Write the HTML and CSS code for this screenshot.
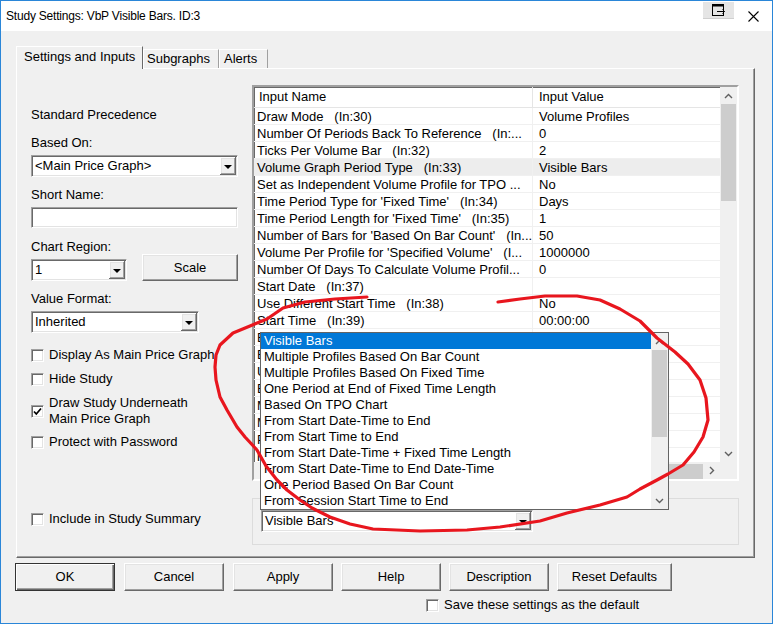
FILE: index.html
```html
<!DOCTYPE html>
<html lang="en">
<head>
	<meta charset="utf-8">
	<title>Study Settings</title>
	<link rel="stylesheet" href="styles.css">
</head>
<body>
<div class="dialog">
	<div class="titlebar">
		<span class="title">Study Settings: VbP Visible Bars. ID:3</span>
		<span class="tb-btn">
			<svg width="14" height="12" viewBox="0 0 14 12"><rect x="0.5" y="0.5" width="11" height="11" fill="none" stroke="#000"/><rect x="0" y="0" width="12" height="2.5" fill="#000"/><path d="M5 7.5H12.5M10.5 5.5L12.5 7.5L10.5 9.5" stroke="#000" fill="none"/></svg>
		</span>
		<span class="tb-close">
			<svg width="11" height="11" viewBox="0 0 11 11"><path d="M0.5 0.5L10.5 10.5M10.5 0.5L0.5 10.5" stroke="#000" stroke-width="1.1"/></svg>
		</span>
	</div>

	<div class="client">
		<div class="tabs">
			<span class="tab active">Settings and Inputs</span>
			<span class="tab tab-sub">Subgraphs</span>
			<span class="tab tab-alerts">Alerts</span>
		</div>

		<div class="panel">
			<div class="left">
				<div class="label first">Standard Precedence</div>
				<div class="label based">Based On:</div>
				<div class="combo combo-full"><span class="combo-text">&lt;Main Price Graph&gt;</span><span class="drop"></span></div>
				<div class="label">Short Name:</div>
				<div class="textbox"></div>
				<div class="label region">Chart Region:</div>
				<div class="region-row">
					<div class="combo combo-small"><span class="combo-text">1</span><span class="drop"></span></div>
					<div class="btn scale">Scale</div>
				</div>
				<div class="label">Value Format:</div>
				<div class="combo combo-format"><span class="combo-text">Inherited</span><span class="drop"></span></div>

				<div class="check c1"><span class="box"></span><span>Display As Main Price Graph</span></div>
				<div class="check c2"><span class="box"></span><span>Hide Study</span></div>
				<div class="check c3"><span class="box"><svg width="9" height="9" viewBox="0 0 9 9"><path d="M1 4.5L3.3 7L8 1.5" stroke="#000" stroke-width="1.7" fill="none"/></svg></span><span>Draw Study Underneath<br>Main Price Graph</span></div>
				<div class="check c4"><span class="box"></span><span>Protect with Password</span></div>
				<div class="check c5"><span class="box"></span><span>Include in Study Summary</span></div>
			</div>

			<div class="right">
				<div class="grid">
					<div class="grid-body">
						<div class="row head"><span class="name">Input Name</span><span class="value">Input Value</span></div>
						<div class="row"><span class="name">Draw Mode   (In:30)</span><span class="value">Volume Profiles</span></div>
						<div class="row"><span class="name">Number Of Periods Back To Reference   (In:...</span><span class="value">0</span></div>
						<div class="row"><span class="name">Ticks Per Volume Bar   (In:32)</span><span class="value">2</span></div>
						<div class="row current"><span class="name">Volume Graph Period Type   (In:33)</span><span class="value">Visible Bars</span></div>
						<div class="row"><span class="name">Set as Independent Volume Profile for TPO ...</span><span class="value">No</span></div>
						<div class="row"><span class="name">Time Period Type for 'Fixed Time'   (In:34)</span><span class="value">Days</span></div>
						<div class="row"><span class="name">Time Period Length for 'Fixed Time'   (In:35)</span><span class="value">1</span></div>
						<div class="row"><span class="name">Number of Bars for 'Based On Bar Count'   (In...</span><span class="value">50</span></div>
						<div class="row"><span class="name">Volume Per Profile for 'Specified Volume'   (I...</span><span class="value">1000000</span></div>
						<div class="row"><span class="name">Number Of Days To Calculate Volume Profil...</span><span class="value">0</span></div>
						<div class="row"><span class="name">Start Date   (In:37)</span><span class="value"></span></div>
						<div class="row"><span class="name">Use Different Start Time   (In:38)</span><span class="value">No</span></div>
						<div class="row"><span class="name">Start Time   (In:39)</span><span class="value">00:00:00</span></div>
						<div class="row"><span class="name">E</span><span class="value"></span></div>
						<div class="row"><span class="name">E</span><span class="value"></span></div>
						<div class="row"><span class="name">U</span><span class="value"></span></div>
						<div class="row"><span class="name">E</span><span class="value"></span></div>
						<div class="row"><span class="name">M</span><span class="value"></span></div>
						<div class="row"><span class="name">M</span><span class="value"></span></div>
						<div class="row"><span class="name">P</span><span class="value"></span></div>
						<div class="row"><span class="name">n</span><span class="value"></span></div>
					</div>
					<div class="vscroll">
						<span class="arrow"><svg width="9" height="6" viewBox="0 0 9 6"><path d="M1 5L4.5 1.5L8 5" stroke="#606060" stroke-width="1.4" fill="none"/></svg></span>
						<span class="thumb v-thumb"></span>
						<span class="track"></span>
						<span class="arrow"><svg width="9" height="6" viewBox="0 0 9 6"><path d="M1 1L4.5 4.5L8 1" stroke="#606060" stroke-width="1.4" fill="none"/></svg></span>
					</div>
					<div class="hscroll">
						<span class="arrow"><svg width="6" height="9" viewBox="0 0 6 9"><path d="M5 1L1.5 4.5L5 8" stroke="#606060" stroke-width="1.4" fill="none"/></svg></span>
						<span class="track"></span>
						<span class="thumb h-thumb"></span>
						<span class="arrow"><svg width="6" height="9" viewBox="0 0 6 9"><path d="M1 1L4.5 4.5L1 8" stroke="#606060" stroke-width="1.4" fill="none"/></svg></span>
					</div>
					<div class="corner"></div>
				</div>

				<div class="group">
					<div class="combo combo-edit"><span class="combo-text">Visible Bars</span><span class="drop"></span></div>
				</div>
			</div>
		</div>

		<div class="buttons">
			<div class="btn default">OK</div>
			<div class="btn">Cancel</div>
			<div class="btn">Apply</div>
			<div class="btn">Help</div>
			<div class="btn">Description</div>
			<div class="btn wide">Reset Defaults</div>
		</div>
		<div class="save-default"><span class="box"></span><span>Save these settings as the default</span></div>
	</div>

	<!-- open list of the combo in the group box -->
	<div class="dropdown">
		<div class="dd-items">
			<div class="dd-item selected">Visible Bars</div>
			<div class="dd-item">Multiple Profiles Based On Bar Count</div>
			<div class="dd-item">Multiple Profiles Based On Fixed Time</div>
			<div class="dd-item">One Period at End of Fixed Time Length</div>
			<div class="dd-item">Based On TPO Chart</div>
			<div class="dd-item">From Start Date-Time to End</div>
			<div class="dd-item">From Start Time to End</div>
			<div class="dd-item">From Start Date-Time + Fixed Time Length</div>
			<div class="dd-item">From Start Date-Time to End Date-Time</div>
			<div class="dd-item">One Period Based On Bar Count</div>
			<div class="dd-item">From Session Start Time to End</div>
		</div>
		<div class="dd-scroll">
			<span class="arrow"><svg width="9" height="6" viewBox="0 0 9 6"><path d="M1 5L4.5 1.5L8 5" stroke="#606060" stroke-width="1.4" fill="none"/></svg></span>
			<span class="thumb dd-thumb"></span>
			<span class="track"></span>
			<span class="arrow"><svg width="9" height="6" viewBox="0 0 9 6"><path d="M1 1L4.5 4.5L8 1" stroke="#606060" stroke-width="1.4" fill="none"/></svg></span>
		</div>
	</div>

	<!-- red pen mark drawn over the screenshot -->
	<svg class="ink" width="773" height="624" viewBox="0 0 773 624">
		<polyline points="498,302 520,299 545,296 577,296 600,300 620,309 640,321 657,338 675,352 688,364 700,380 706,398 708,420 703,437 694,452 683,465 668,474 657,480 640,489 627,497 600,505 567,513 540,521 500,527 467,530 420,531 373,529 350,524 330,517 312,508 300,500 287,490 277,480 266,466 257,450 245,437 237,427 227,410 220,397 216,380 215,367 216,355 220,345 233,333 250,326 267,319 283,308 305,302 335,299 367,297" fill="none" stroke="#e8161e" stroke-width="3.2" stroke-linejoin="round" stroke-linecap="round"/>
	</svg>
</div>
</body>
</html>
```

FILE: styles.css
```css
*	{margin:0;padding:0;box-sizing:border-box;}
body	{font-family:"Liberation Sans", Arial, sans-serif;font-size:13px;line-height:16px;color:#000;background:#fff;}

.dialog	{position:relative;width:773px;height:624px;border:1px solid #2a86d8;background:#f0f0f0;overflow:hidden;}

.titlebar	{display:flex;align-items:center;height:30px;padding-left:5px;background:#fff;}
.titlebar .title	{flex:1;font-size:12px;letter-spacing:-0.2px;}
.titlebar .tb-btn	{align-self:flex-start;display:flex;justify-content:center;align-items:center;width:31px;height:17px;margin-top:1px;background:#e5e5e5;border-bottom:1px solid #cfcfcf;}
.titlebar .tb-close	{display:flex;width:11px;margin:0 13px 0 14px;}

.client	{padding:0 17px 0 15px;}

.tabs	{display:flex;align-items:flex-end;height:22px;margin-top:15px;position:relative;z-index:1;}
.tab	{height:19px;line-height:17px;padding-left:3px;border:1px solid;border-color:#fff #a0a0a0 transparent #fff;border-bottom:0;}
.tab.active	{width:127px;height:23px;margin-bottom:-1px;padding-left:7px;line-height:19px;background:#f0f0f0;border-right-color:#696969;}
.tab.tab-sub	{width:76px;}
.tab.tab-alerts	{width:49px;padding-left:4px;}

.panel	{display:flex;gap:14px;height:490px;padding:16px 15px 0 14px;border:1px solid;border-color:#fff #696969 #696969 #fff;box-shadow:inset -1px -1px #a0a0a0;}

.left	{width:207px;display:flex;flex-direction:column;}
.left .label	{margin-top:9px;height:16px;line-height:17px;}
.left .label.first	{margin-top:21px;}
.left .label.based	{margin-top:12px;}
.left .label.region	{margin-top:10px;}

.combo	{display:flex;align-items:center;height:22px;margin-top:5px;background:#fff;border:1px solid;border-color:#a0a0a0 #fff #fff #a0a0a0;box-shadow:inset 1px 1px #696969, inset -1px -1px #e3e3e3;}
.combo .combo-text	{flex:1;padding-left:3px;white-space:nowrap;overflow:hidden;}
.combo .drop	{position:relative;width:16px;height:18px;margin-right:1px;background:#f0f0f0;box-shadow:inset -1px -1px #696969, inset 1px 1px #fff, inset -2px -2px #a0a0a0, inset 2px 2px #e3e3e3;}
.combo .drop::after	{content:"";position:absolute;left:4px;top:8px;border-style:solid;border-width:4px 4px 0 4px;border-color:#000 transparent transparent transparent;}
.combo-full	{width:207px;}
.combo-small	{width:96px;}
.combo-format	{width:168px;}
.combo-edit	{width:272px;margin-top:0;}

.textbox	{width:207px;height:21px;margin-top:5px;background:#fff;border:1px solid;border-color:#a0a0a0 #fff #fff #a0a0a0;box-shadow:inset 1px 1px #696969, inset -1px -1px #e3e3e3;}

.region-row	{display:flex;align-items:flex-start;gap:15px;}
.region-row .combo	{margin-top:5px;}

.btn	{display:flex;justify-content:center;align-items:center;width:100px;height:28px;background:#f0f0f0;border:1px solid;border-color:#fff #696969 #696969 #fff;box-shadow:inset -1px -1px #a0a0a0, inset 1px 1px #e3e3e3;}
.btn.scale	{width:96px;height:27px;}
.btn.default	{border-color:#333;box-shadow:inset 1px 1px #fff, inset -1px -1px #696969, inset -2px -2px #a0a0a0;}
.btn.wide	{width:115px;}

.box	{display:flex;justify-content:center;align-items:center;flex:none;width:13px;height:13px;background:#fff;border:1px solid;border-color:#a0a0a0 #fff #fff #a0a0a0;box-shadow:inset 1px 1px #696969, inset -1px -1px #e3e3e3;}

.check	{display:flex;align-items:center;gap:5px;}
.check.c1	{margin-top:14px;}
.check.c2	{margin-top:8px;}
.check.c3	{margin-top:8px;}
.check.c4	{margin-top:7px;}
.check.c5	{margin-top:61px;}

.right	{width:487px;}

.grid	{display:grid;grid-template-columns:466px 17px;grid-template-rows:375px 17px;height:396px;border:2px solid;border-color:#a0a0a0 #fff #fff #a0a0a0;box-shadow:inset 1px 1px #696969;background:#fff;}
.grid-body	{overflow:hidden;}
.grid .row	{display:flex;height:17px;line-height:17px;border-bottom:1px solid #f0f0f0;white-space:pre;}
.grid .row .name	{width:279px;padding-left:3px;overflow:hidden;border-right:1px solid #f0f0f0;}
.grid .row .value	{flex:1;padding-left:6px;overflow:hidden;}
.grid .row.head	{height:21px;line-height:19px;border-bottom-color:#e5e5e5;}
.grid .row.head .name	{padding-left:5px;border-right-color:#e5e5e5;}
.grid .row.current	{background:#ededed;}

.vscroll	{display:flex;flex-direction:column;background:#f0f0f0;}
.hscroll	{display:flex;background:#f0f0f0;}
.corner	{background:#f0f0f0;}
.arrow	{display:flex;justify-content:center;align-items:center;flex:none;width:17px;height:17px;}
.track	{flex:1;}
.thumb	{flex:none;background:#cdcdcd;}
.v-thumb	{height:97px;margin:0 1px;}
.h-thumb	{width:232px;margin:2px 0 0;}

.group	{height:47px;margin-top:17px;padding:11px 0 0 8px;border:1px solid #dcdcdc;}

.buttons	{display:flex;gap:9px;margin:5px 0 0 -1px;}
.buttons .btn:nth-child(n+4)	{margin-left:-1px;}
.save-default	{display:flex;align-items:center;gap:5px;margin-top:6px;padding-left:410px;height:16px;}

.dropdown	{position:absolute;left:259px;top:331px;display:flex;width:409px;height:178px;background:#fff;border:1px solid #646464;z-index:2;}
.dd-items	{flex:1;}
.dd-item	{height:16px;padding-left:3px;white-space:nowrap;}
.dd-item.selected	{background:#0078d7;color:#fff;}
.dd-scroll	{display:flex;flex-direction:column;width:17px;background:#f0f0f0;}
.dd-thumb	{height:87px;margin:0 1px;}

.ink	{position:absolute;left:-1px;top:-1px;z-index:3;pointer-events:none;}
```
